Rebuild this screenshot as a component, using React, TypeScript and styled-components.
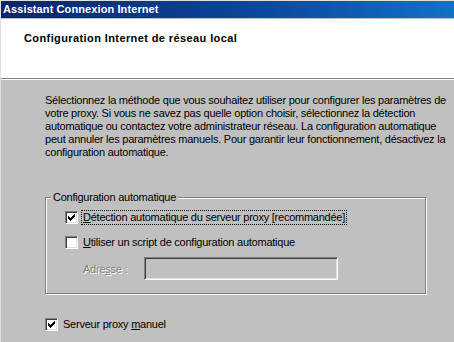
import styled, { createGlobalStyle } from "styled-components";

const GlobalStyle = createGlobalStyle`
  html, body {
    margin: 0;
    padding: 0;
    background: #c0c0c0;
  }
  body {
    font-family: "Liberation Sans", Arial, sans-serif;
    font-size: 11px;
  }
`;

const Window = styled.div`
  width: 454px;
  height: 342px;
  overflow: hidden;
  box-sizing: border-box;
  border-top: 1px solid #dfdfdf;
  border-left: 1px solid #dfdfdf;
  background: #c0c0c0;
  display: flex;
  flex-direction: column;
`;

const TitleBar = styled.div`
  height: 17px;
  background: linear-gradient(to right, #0a246a 0%, #0c4aa0 60%, #1272c6 100%);
  color: #fff;
  font-weight: bold;
  font-size: 11px;
  line-height: 17px;
  letter-spacing: 0.1px;
  padding-left: 2px;
  margin-bottom: 1px;
  white-space: nowrap;
`;

const Header = styled.div`
  height: 60px;
  background: #fff;
  box-sizing: border-box;
  padding: 13px 0 0 23px;
  border-bottom: 1px solid #808080;
  box-shadow: 0 1px 0 #fff;
  margin-bottom: 1px;
`;

const HeaderTitle = styled.div`
  font-weight: bold;
  font-size: 11px;
  letter-spacing: 0.4px;
  color: #000;
  white-space: nowrap;
`;

const Body = styled.div`
  padding: 14px 0 0 44px;
  color: #000;
  letter-spacing: -0.24px;
`;

const Intro = styled.p`
  margin: 0;
  line-height: 13px;
  white-space: nowrap;
`;

const GroupBox = styled.fieldset`
  margin: 32px 0 0 0;
  padding: 0;
  width: 381px;
  height: 103px;
  box-sizing: border-box;
  border: 1px solid #808080;
  box-shadow: 1px 1px 0 #fff, inset 1px 1px 0 #fff;
  min-inline-size: 0;
`;

const Legend = styled.legend`
  margin-left: 5px;
  padding: 0 2px;
  background: #c0c0c0;
  line-height: 13px;
`;

const GroupContent = styled.div`
  padding: 6px 0 0 19px;
`;

const Row = styled.div<{ $gap?: number }>`
  display: flex;
  align-items: center;
  height: 15px;
  margin-top: ${({ $gap }) => $gap ?? 0}px;
`;

const Box = styled.span`
  width: 13px;
  height: 13px;
  box-sizing: border-box;
  flex: none;
  background: #fff;
  border-top: 1px solid #808080;
  border-left: 1px solid #808080;
  border-right: 1px solid #fff;
  border-bottom: 1px solid #fff;
  box-shadow: inset 1px 1px 0 #404040, inset -1px -1px 0 #dfdfdf;
  display: flex;
  align-items: center;
  justify-content: center;
`;

const Label = styled.span<{ $focus?: boolean }>`
  margin-left: 4px;
  padding: 0 1px;
  line-height: 13px;
  white-space: nowrap;
  outline: ${({ $focus }) => ($focus ? "1px dotted #000" : "none")};
`;

const AddressRow = styled.div`
  display: flex;
  align-items: center;
  margin: 7px 0 0 18px;
`;

const DisabledLabel = styled.span`
  width: 61px;
  color: #808080;
  text-shadow: 1px 1px 0 #fff;
  white-space: nowrap;
`;

const Field = styled.div`
  width: 194px;
  height: 23px;
  box-sizing: border-box;
  background: #c0c0c0;
  border-top: 1px solid #808080;
  border-left: 1px solid #808080;
  border-right: 1px solid #fff;
  border-bottom: 1px solid #fff;
  box-shadow: inset 1px 1px 0 #404040, inset -1px -1px 0 #dfdfdf;
`;

const Manual = styled(Row)`
  margin-top: 23px;
`;

const Check = () => (
  <svg width="7" height="7" viewBox="0 0 7 7" shapeRendering="crispEdges">
    <path
      d="M0 2h1v3h-1zM1 3h1v3h-1zM2 4h1v3h-1zM3 3h1v3h-1zM4 2h1v3h-1zM5 1h1v3h-1zM6 0h1v3h-1z"
      fill="#000"
    />
  </svg>
);

const Checkbox = ({ checked }: { checked?: boolean }) => <Box>{checked && <Check />}</Box>;

export default function App() {
  return (
    <>
      <GlobalStyle />
      <Window>
        <TitleBar>Assistant Connexion Internet</TitleBar>
        <Header>
          <HeaderTitle>Configuration Internet de réseau local</HeaderTitle>
        </Header>
        <Body>
          <Intro>
            Sélectionnez la méthode que vous souhaitez utiliser pour configurer les paramètres de
            <br />
            votre proxy. Si vous ne savez pas quelle option choisir, sélectionnez la détection
            <br />
            automatique ou contactez votre administrateur réseau. La configuration automatique
            <br />
            peut annuler les paramètres manuels. Pour garantir leur fonctionnement, désactivez la
            <br />
            configuration automatique.
          </Intro>
          <GroupBox>
            <Legend>Configuration automatique</Legend>
            <GroupContent>
              <Row>
                <Checkbox checked />
                <Label $focus>
                  <u>D</u>étection automatique du serveur proxy [recommandée]
                </Label>
              </Row>
              <Row $gap={10}>
                <Checkbox />
                <Label>
                  <u>U</u>tiliser un script de configuration automatique
                </Label>
              </Row>
              <AddressRow>
                <DisabledLabel>
                  Adre<u>s</u>se :
                </DisabledLabel>
                <Field />
              </AddressRow>
            </GroupContent>
          </GroupBox>
          <Manual>
            <Checkbox checked />
            <Label>
              Serveur proxy <u>m</u>anuel
            </Label>
          </Manual>
        </Body>
      </Window>
    </>
  );
}
